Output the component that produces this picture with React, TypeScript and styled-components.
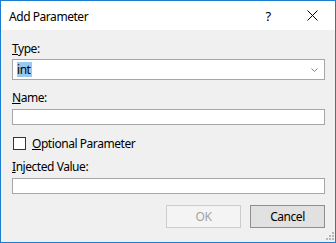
import React from 'react';
import styled, { createGlobalStyle } from 'styled-components';

const GlobalStyle = createGlobalStyle`
  html, body {
    margin: 0;
    padding: 0;
    background: #ffffff;
  }
  * {
    box-sizing: border-box;
  }
`;

const Window = styled.div`
  position: relative;
  width: 336px;
  height: 243px;
  border: 1px solid #1a7dd2;
  background: #f0f0f0;
  display: flex;
  flex-direction: column;
  font-family: 'Noto Sans', 'Open Sans', sans-serif;
  font-size: 12px;
  letter-spacing: -0.45px;
  color: #000000;
`;

const TitleBar = styled.div`
  height: 29px;
  background: #ffffff;
  display: flex;
  align-items: center;
  padding-left: 8px;
`;

const Title = styled.div`
  flex: 1;
  font-size: 12px;
  line-height: 15px;
  padding-top: 1px;
`;

const TitleButton = styled.div<{ $width: number }>`
  width: ${(p) => p.$width}px;
  height: 29px;
  display: flex;
  align-items: center;
  justify-content: center;
  font-size: 13px;
`;

const Body = styled.div`
  flex: 1;
  display: flex;
  flex-direction: column;
  padding: 0 10px 0 11px;
`;

const Label = styled.div<{ $top: number }>`
  margin-top: ${(p) => p.$top}px;
  height: 15px;
  line-height: 15px;
`;

const Key = styled.span`
  text-decoration: underline;
  text-underline-offset: 1px;
`;

const Combo = styled.div`
  margin-top: 3px;
  height: 21px;
  background: #ffffff;
  border: 1px solid #a6a6a6;
  display: flex;
  align-items: center;
  padding: 0 6px 0 4px;
`;

const Selected = styled.span`
  background: #99c9ef;
  line-height: 15px;
  height: 15px;
  padding: 0 1px 0 0;
`;

const ComboValue = styled.div`
  flex: 1;
  display: flex;
`;

const TextBox = styled.div`
  margin-top: 4px;
  height: 16px;
  background: #ffffff;
  border: 1px solid #a6a6a6;
`;

const CheckRow = styled.label`
  margin-top: 11px;
  height: 15px;
  display: flex;
  align-items: center;
  gap: 6px;
  padding-left: 1px;
`;

const CheckBox = styled.span`
  width: 13px;
  height: 13px;
  border: 1px solid #333333;
  background: #ffffff;
`;

const ButtonRow = styled.div`
  margin-top: 11px;
  display: flex;
  justify-content: flex-end;
  gap: 9px;
`;

const Button = styled.div<{ $disabled?: boolean }>`
  width: 75px;
  height: 23px;
  display: flex;
  align-items: center;
  justify-content: center;
  background: ${(p) => (p.$disabled ? '#f4f4f4' : '#e1e1e1')};
  border: 1px solid ${(p) => (p.$disabled ? '#cccccc' : '#8f8f8f')};
  color: ${(p) => (p.$disabled ? '#a3a3a3' : '#000000')};
  line-height: 15px;
`;

const Grip = styled.svg`
  position: absolute;
  right: 1px;
  bottom: 1px;
`;

const Chevron = () => (
  <svg width="7" height="4" viewBox="0 0 7 4">
    <path d="M0.5 0.5 L3.5 3.5 L6.5 0.5" fill="none" stroke="#808080" strokeWidth="1" />
  </svg>
);

const CloseIcon = () => (
  <svg width="11" height="11" viewBox="0 0 11 11">
    <path d="M0.5 0.5 L10.5 10.5 M10.5 0.5 L0.5 10.5" stroke="#000000" strokeWidth="1" />
  </svg>
);

const App = () => {
  const dots = [
    [8, 0],
    [8, 3],
    [5, 3],
    [8, 6],
    [5, 6],
    [2, 6],
  ];
  return (
    <>
      <GlobalStyle />
      <Window>
        <TitleBar>
          <Title>Add Parameter</Title>
          <TitleButton $width={42}>?</TitleButton>
          <TitleButton $width={46}>
            <CloseIcon />
          </TitleButton>
        </TitleBar>
        <Body>
          <Label $top={11}>
            <Key>T</Key>ype:
          </Label>
          <Combo>
            <ComboValue>
              <Selected>int</Selected>
            </ComboValue>
            <Chevron />
          </Combo>
          <Label $top={10}>
            <Key>N</Key>ame:
          </Label>
          <TextBox />
          <CheckRow>
            <CheckBox />
            <span>
              <Key>O</Key>ptional Parameter
            </span>
          </CheckRow>
          <Label $top={8}>
            <Key>I</Key>njected Value:
          </Label>
          <TextBox />
          <ButtonRow>
            <Button $disabled>OK</Button>
            <Button>Cancel</Button>
          </ButtonRow>
        </Body>
        <Grip width="10" height="9" viewBox="0 0 10 9">
          {dots.map(([x, y]) => (
            <rect key={`${x}-${y}`} x={x} y={y} width="2" height="2" fill="#b8b8b8" />
          ))}
        </Grip>
      </Window>
    </>
  );
};

export default App;
